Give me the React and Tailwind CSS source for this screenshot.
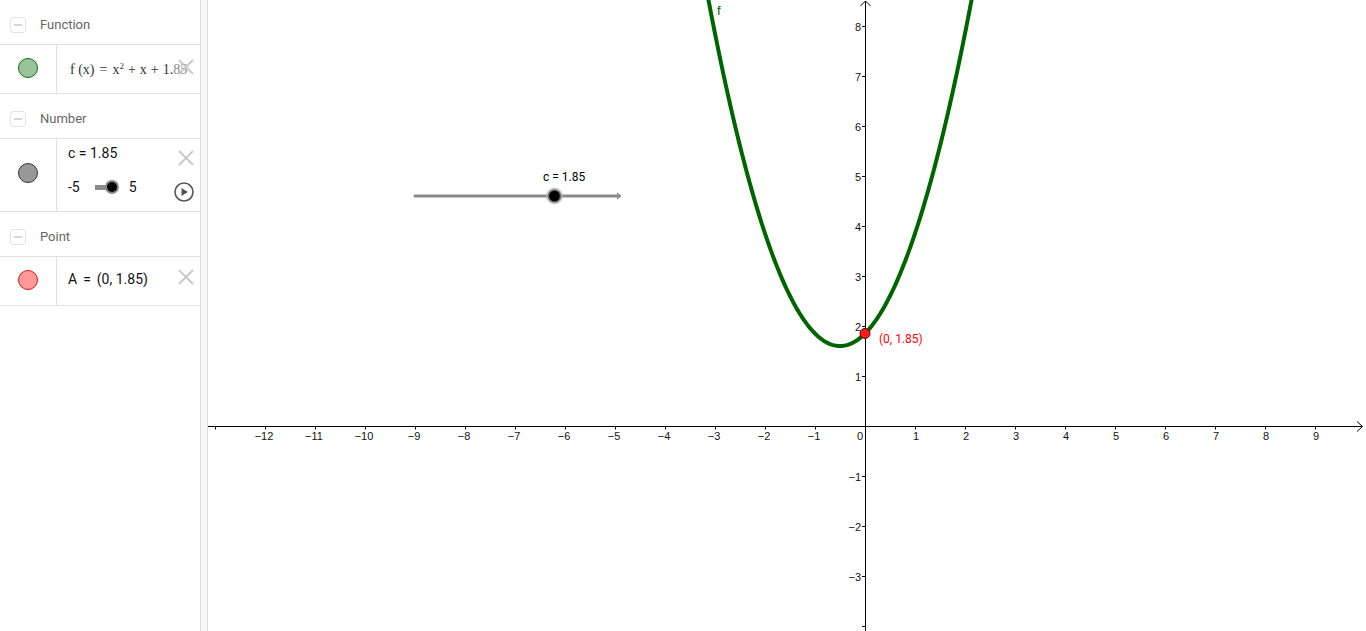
import React from "react";

const OX = 865;
const OY = 426;
const U = 50;

function XIcon({ className }) {
  return (
    <svg className={className} width="18" height="18" viewBox="0 0 18 18">
      <path d="M2 2 L16 16 M16 2 L2 16" stroke="#c8c8c8" strokeWidth="1.8" fill="none" />
    </svg>
  );
}

function Header({ label }) {
  return (
    <div className="h-[45px] border-b border-[#e0e0e0] flex items-center pl-[10px] pt-[5px]">
      <div className="w-4 h-4 rounded-[3px] border border-[#e3e3e3] flex items-center justify-center">
        <div className="w-[8px] h-[2px] bg-[#d6d6d6]" />
      </div>
      <span className="ml-[14px] text-[13px] text-[#666]" style={{ fontFamily: "Roboto, sans-serif" }}>
        {label}
      </span>
    </div>
  );
}

function Dot({ fill, stroke }) {
  return <div className={`w-[20px] h-[20px] rounded-full border ${fill} ${stroke}`} />;
}

function Graph() {
  const pts = [];
  for (let x = -3.25; x <= 2.25; x += 0.02) {
    const y = x * x + x + 1.85;
    pts.push(`${(OX + x * U).toFixed(2)},${(OY - y * U).toFixed(2)}`);
  }
  const xTicks = [];
  for (let i = -13; i <= 9; i++) if (i !== 0) xTicks.push(i);
  const yTicks = [];
  for (let j = -4; j <= 8; j++) if (j !== 0) yTicks.push(j);
  const minus = (n) => (n < 0 ? "\u2212" + Math.abs(n) : String(n));
  return (
    <svg className="block w-full h-full" viewBox="208 0 1158 631" preserveAspectRatio="xMinYMin meet">
      <g fontFamily="'Liberation Sans', Arial, sans-serif" fontSize="11" fill="#111">
        <line x1="208" y1={OY + 0.5} x2="1362" y2={OY + 0.5} stroke="#000" strokeWidth="1" />
        <path d="M1357 421.5 L1362.5 426.5 L1357 431.5" stroke="#000" strokeWidth="1" fill="none" />
        {xTicks.map((i) => (
          <g key={"x" + i}>
            <line x1={OX + i * U + 0.5} y1={OY} x2={OX + i * U + 0.5} y2={OY + 3.5} stroke="#000" strokeWidth="1" />
            {i >= -12 && (
              <text x={OX + i * U + (i < 0 ? -1 : 1)} y={OY + 14} textAnchor="middle">
                {minus(i)}
              </text>
            )}
          </g>
        ))}
        <text x={OX - 5} y={OY + 14} textAnchor="middle">0</text>
        <line x1={OX + 0.5} y1="1" x2={OX + 0.5} y2="631" stroke="#000" strokeWidth="1" />
        <path d="M860.5 6 L865.5 1 L870.5 6" stroke="#000" strokeWidth="1" fill="none" />
        {yTicks.map((j) => (
          <g key={"y" + j}>
            <line x1={OX - 3} y1={OY - j * U + 0.5} x2={OX} y2={OY - j * U + 0.5} stroke="#000" strokeWidth="1" />
            {j >= -3 && (
              <text x={OX - 4} y={OY - j * U + 4.5} textAnchor="end">
                {minus(j)}
              </text>
            )}
          </g>
        ))}
      </g>
      <polyline points={pts.join(" ")} fill="none" stroke="#006400" strokeWidth="4" strokeLinejoin="round" />
      <text x="717" y="15" fontSize="13" fill="#006400" fontFamily="'Liberation Sans', Arial, sans-serif">f</text>
      <circle cx={OX} cy={OY - 1.85 * U} r="5" fill="#ff1a1a" stroke="#5a0000" strokeWidth="1" />
      <text x="879" y="343" fontSize="12" fill="#ff0000" fontFamily="Roboto, 'Liberation Sans', sans-serif">(0, 1.85)</text>
      <line x1="415" y1="196" x2="619" y2="196" stroke="#8a8a8a" strokeWidth="3" strokeLinecap="round" />
      <path d="M617 193 L620.5 196 L617 199" stroke="#8a8a8a" strokeWidth="1.2" fill="none" />
      <circle cx="554.5" cy="196" r="8.5" fill="#bbb" opacity="0.7" />
      <circle cx="554.5" cy="196" r="6" fill="#000" stroke="#666" strokeWidth="1.5" />
      <text x="543" y="181" fontSize="12" fill="#000" fontFamily="Roboto, 'Liberation Sans', sans-serif">c = 1.85</text>
    </svg>
  );
}

export default function App() {
  const roboto = { fontFamily: "Roboto, 'Liberation Sans', sans-serif" };
  return (
    <div className="w-[1366px] h-[631px] flex bg-white overflow-hidden">
      <div className="w-[200px] h-full flex flex-col shrink-0 bg-white">
        <Header label="Function" />
        <div className="h-[49px] border-b border-[#e0e0e0] flex">
          <div className="w-[57px] border-r border-[#e0e0e0] flex items-center justify-center pb-[3px]">
            <Dot fill="bg-[#99c499]" stroke="border-[#0a6e0a]" />
          </div>
          <div className="flex-1 relative flex items-center pl-[13px]">
            <span className="text-[14px] text-[#333] whitespace-nowrap" style={{ fontFamily: "'Liberation Serif', 'DejaVu Serif', serif" }}>
              f (x)<span className="mx-[5px]">=</span>x<sup className="text-[9px]">2</sup>
              <span className="mx-[4px]">+</span>x<span className="mx-[4px]">+</span>1.
              <span className="text-[#888]">85</span>
            </span>
            <XIcon className="absolute right-[5px] top-[13px]" />
          </div>
        </div>
        <Header label="Number" />
        <div className="h-[73px] border-b border-[#e0e0e0] flex">
          <div className="w-[57px] border-r border-[#e0e0e0] flex items-center justify-center pb-[4px]">
            <Dot fill="bg-[#999999]" stroke="border-[#333]" />
          </div>
          <div className="flex-1 relative pl-[11px] pt-[5px]" style={roboto}>
            <div className="text-[14px] text-[#111] leading-[18px]">c = 1.85</div>
            <div className="flex items-center mt-[16px] text-[14px] text-[#111] leading-[18px]">
              <span>-5</span>
              <div className="ml-[15px] w-[16px] h-[5px] bg-[#8a8a8a]" />
              <div className="w-[14px] h-[14px] rounded-full bg-black border-[2px] border-[#888] -ml-[6px]" />
              <span className="ml-[10px]">5</span>
            </div>
            <XIcon className="absolute right-[5px] top-[10px]" />
            <svg className="absolute right-[5px] top-[42px]" width="22" height="22" viewBox="0 0 22 22">
              <circle cx="11" cy="11" r="9" fill="none" stroke="#555" strokeWidth="1.6" />
              <path d="M8.5 7 L15 11 L8.5 15 Z" fill="#555" />
            </svg>
          </div>
        </div>
        <Header label="Point" />
        <div className="h-[49px] border-b border-[#e0e0e0] flex">
          <div className="w-[57px] border-r border-[#e0e0e0] flex items-center justify-center pb-[2px]">
            <Dot fill="bg-[#ff9999]" stroke="border-[#e01010]" />
          </div>
          <div className="flex-1 relative flex items-center pl-[11px] pb-[3px]">
            <span className="text-[14px] text-[#111] whitespace-nowrap" style={roboto}>
              A<span className="mx-[6px]">=</span>(0, 1.85)
            </span>
            <XIcon className="absolute right-[5px] top-[11px]" />
          </div>
        </div>
      </div>
      <div className="w-[8px] h-full shrink-0 bg-[#f7f7f7] border-l border-r border-[#dcdcdc]" />
      <div className="flex-1 h-full relative">
        <Graph />
      </div>
    </div>
  );
}
